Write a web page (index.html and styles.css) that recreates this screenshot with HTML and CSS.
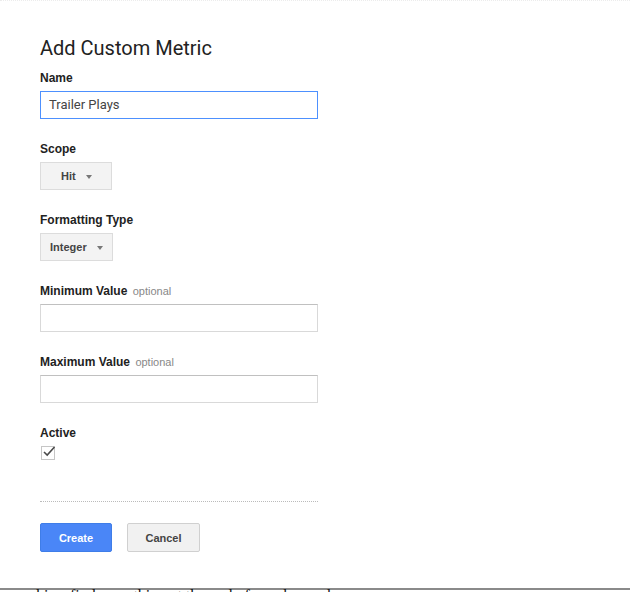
FILE: index.html
```html
<!DOCTYPE html>
<html>
<head>
<meta charset="utf-8">
<link rel="stylesheet" href="styles.css">
</head>
<body>
<div class="page">
  <h1 class="title">Add Custom Metric</h1>

  <div class="field">
    <div class="label">Name</div>
    <div class="input focused">Trailer Plays</div>
  </div>

  <div class="field">
    <div class="label">Scope</div>
    <div class="select"><span>Hit</span><i class="caret"></i></div>
  </div>

  <div class="field">
    <div class="label">Formatting Type</div>
    <div class="select"><span>Integer</span><i class="caret"></i></div>
  </div>

  <div class="field">
    <div class="label">Minimum Value <span class="opt">optional</span></div>
    <div class="input"></div>
  </div>

  <div class="field">
    <div class="label">Maximum Value <span class="opt">optional</span></div>
    <div class="input"></div>
  </div>

  <div class="field">
    <div class="label">Active</div>
    <div class="check">
      <svg width="14" height="13" viewBox="0 0 14 13"><path d="M2 7 L5.2 10 L12.5 2" fill="none" stroke="#4a4a4a" stroke-width="1.6"/></svg>
    </div>
  </div>

  <div class="divider"></div>

  <div class="actions">
    <div class="btn primary">Create</div>
    <div class="btn">Cancel</div>
  </div>
</div>
<div class="footer">cookies, find something at the end of a web crawler</div>
</body>
</html>
```

FILE: styles.css
```css
html, body {
  margin: 0;
  padding: 0;
  background: #fff;
  overflow: hidden;
}
body {
  font-family: "Liberation Sans", Arial, sans-serif;
  color: #222;
  border-top: 1px dotted #ececec;
}
.page {
  padding: 33px 0 0 40px;
  width: 278px;
}
.title {
  font-family: Roboto, "Liberation Sans", sans-serif;
  font-weight: 400;
  font-size: 20px;
  line-height: 26px;
  margin: 0 0 10px 0;
  color: #222;
  position: relative;
  top: 1px;
}
.field {
  margin-bottom: 22px;
}
.label {
  font-size: 12px;
  font-weight: bold;
  line-height: 16px;
  color: #222;
  margin-bottom: 5px;
}
.opt {
  font-weight: normal;
  font-size: 11px;
  color: #888;
  margin-left: 2px;
}
.input {
  box-sizing: border-box;
  height: 28px;
  width: 278px;
  border: 1px solid #d9d9d9;
  border-top-color: #c0c0c0;
  font-family: Roboto, "Liberation Sans", sans-serif;
  font-size: 13px;
  line-height: 26px;
  padding-left: 8px;
  color: #444;
}
.input.focused {
  border: 1px solid #4d90fe;
}
.select {
  box-sizing: border-box;
  display: inline-flex;
  align-items: center;
  height: 28px;
  padding: 0 10px 0 9px;
  background: #f3f3f3;
  border: 1px solid #dcdcdc;
  font-size: 11px;
  font-weight: bold;
  color: #444;
  gap: 10px;
}
.field:nth-child(3) .select {
  width: 72px;
  padding-left: 20px;
}
.field:nth-child(4) .select {
  width: 73px;
}
.caret {
  width: 0;
  height: 0;
  border-left: 3.5px solid transparent;
  border-right: 3.5px solid transparent;
  border-top: 4px solid #777;
  margin-top: 2px;
}
.check {
  box-sizing: border-box;
  width: 14px;
  height: 14px;
  border: 1px solid #c6c6c6;
  margin-left: 1px;
  margin-top: 1px;
  display: flex;
  align-items: center;
  justify-content: center;
  overflow: visible;
}
.check svg {
  display: block;
  flex: none;
  margin-top: -3px;
  margin-left: 2px;
}
.divider {
  margin-top: 41px;
  border-top: 1px dotted #bbb;
  width: 278px;
}
.actions {
  display: flex;
  gap: 15px;
  margin-top: 21px;
}
.btn {
  box-sizing: border-box;
  width: 73px;
  height: 29px;
  border: 1px solid #d0d0d0;
  background: #f1f1f1;
  color: #444;
  font-size: 11px;
  font-weight: bold;
  display: flex;
  align-items: center;
  justify-content: center;
  border-radius: 2px;
}
.btn.primary {
  width: 72px;
  background: #4a86f7;
  border-color: #3f7de8;
  color: #fff;
}
.footer {
  margin-top: 36px;
  border-top: 2px solid #8a8a8a;
  font-family: "Liberation Serif", serif;
  font-size: 16px;
  line-height: 12px;
  padding-left: 13px;
  color: #111;
}
```
